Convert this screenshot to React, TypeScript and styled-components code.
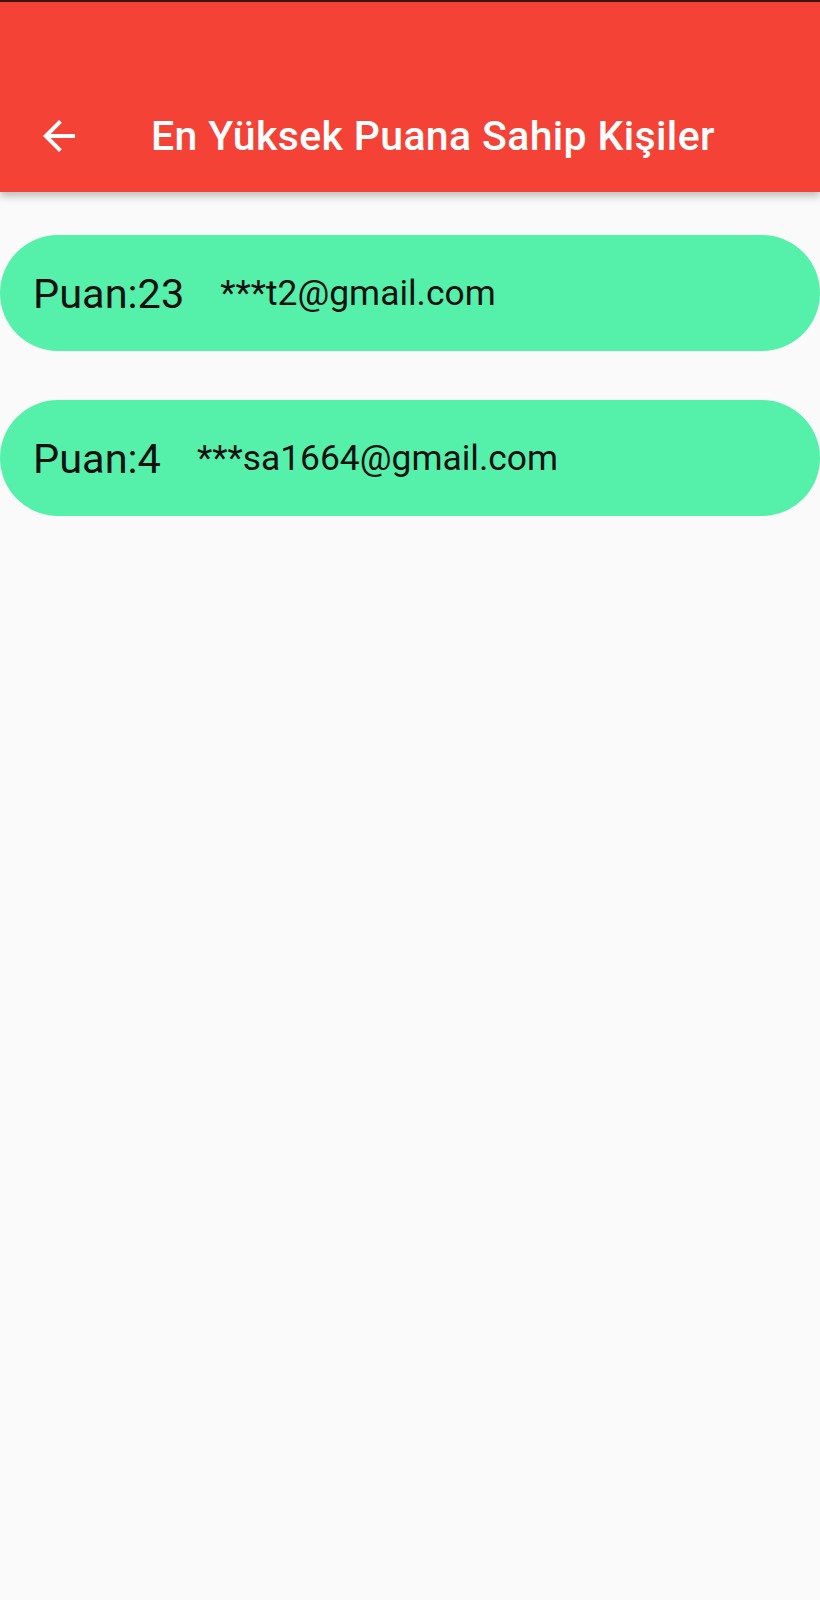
import React from "react";
import styled, { createGlobalStyle } from "styled-components";

interface Scorer {
  score: number;
  email: string;
}

const scorers: Scorer[] = [
  { score: 23, email: "***t2@gmail.com" },
  { score: 4, email: "***sa1664@gmail.com" },
];

function BackArrow() {
  return (
    <svg width="48" height="48" viewBox="0 0 24 24" fill="#ffffff">
      <path d="M20 11H7.83l5.59-5.59L12 4l-8 8 8 8 1.41-1.41L7.83 13H20v-2z" />
    </svg>
  );
}

function ScoreRow({ score, email }: Scorer) {
  return (
    <Pill>
      <Score>Puan:{score}</Score>
      <Email>{email}</Email>
    </Pill>
  );
}

function App() {
  return (
    <>
      <GlobalStyle />
      <Screen>
        <AppBar>
          <Toolbar>
            <IconButton aria-label="Geri">
              <BackArrow />
            </IconButton>
            <Title>En Yüksek Puana Sahip Kişiler</Title>
          </Toolbar>
        </AppBar>
        <List>
          {scorers.map((s) => (
            <ScoreRow key={s.email} score={s.score} email={s.email} />
          ))}
        </List>
      </Screen>
    </>
  );
}

export default App;

const GlobalStyle = createGlobalStyle`
  html, body {
    margin: 0;
    padding: 0;
    background: #fafafa;
  }
  body {
    font-family: Roboto, "Noto Sans", sans-serif;
  }
`;

const Screen = styled.div`
  width: 820px;
  min-height: 1600px;
  background: #fafafa;
  display: flex;
  flex-direction: column;
`;

const AppBar = styled.header`
  background: #f44336;
  border-top: 2px solid #3a1410;
  padding-top: 78px;
  box-shadow: 0 4px 8px rgba(0, 0, 0, 0.25);
  position: relative;
  z-index: 1;
`;

const Toolbar = styled.div`
  height: 112px;
  display: flex;
  align-items: center;
`;

const IconButton = styled.button`
  width: 48px;
  height: 48px;
  margin-left: 35px;
  padding: 0;
  border: none;
  background: transparent;
  display: flex;
  align-items: center;
  justify-content: center;
`;

const Title = styled.h1`
  margin: 0 0 0 68px;
  font-family: Roboto, sans-serif;
  font-weight: 500;
  font-size: 41px;
  color: #ffffff;
  letter-spacing: 0.35px;
`;

const List = styled.div`
  display: flex;
  flex-direction: column;
  gap: 49px;
  padding-top: 43px;
`;

const Pill = styled.div`
  height: 116px;
  background: #55f0aa;
  border-radius: 58px;
  display: flex;
  align-items: center;
  padding-left: 33px;
  gap: 36px;
`;

const Score = styled.span`
  font-family: Roboto, sans-serif;
  font-size: 41.5px;
  color: #111111;
`;

const Email = styled.span`
  font-family: Roboto, sans-serif;
  font-size: 35.4px;
  color: #111111;
`;
